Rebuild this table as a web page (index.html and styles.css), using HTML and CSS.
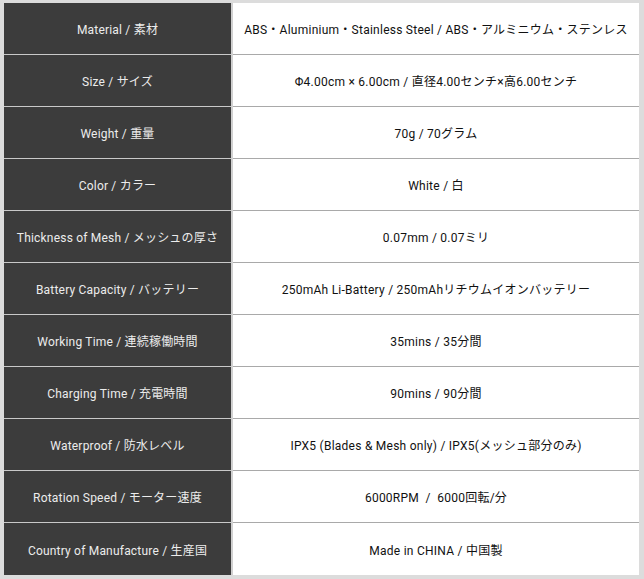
FILE: index.html
```html
<!DOCTYPE html>
<html lang="ja">
<head>
<meta charset="utf-8">
<link rel="stylesheet" href="styles.css">
</head>
<body>
<div class="frame">
<table class="spec">
<tbody>
<tr><th>Material / 素材</th><td>ABS・Aluminium・Stainless Steel / ABS・アルミニウム・ステンレス</td></tr>
<tr><th>Size / サイズ</th><td>Φ4.00cm × 6.00cm / 直径4.00センチ×高6.00センチ</td></tr>
<tr><th>Weight / 重量</th><td>70g / 70グラム</td></tr>
<tr><th>Color / カラー</th><td>White / 白</td></tr>
<tr><th>Thickness of Mesh / メッシュの厚さ</th><td>0.07mm / 0.07ミリ</td></tr>
<tr><th>Battery Capacity / バッテリー</th><td>250mAh Li-Battery / 250mAhリチウムイオンバッテリー</td></tr>
<tr><th>Working Time / 連続稼働時間</th><td>35mins / 35分間</td></tr>
<tr><th>Charging Time / 充電時間</th><td>90mins / 90分間</td></tr>
<tr><th>Waterproof / 防水レベル</th><td>IPX5 (Blades &amp; Mesh only) / IPX5(メッシュ部分のみ)</td></tr>
<tr><th>Rotation Speed / モーター速度</th><td>6000RPM &nbsp;/ &nbsp;6000回転/分</td></tr>
<tr><th>Country of Manufacture / 生産国</th><td>Made in CHINA / 中国製</td></tr>
</tbody>
</table>
</div>
</body>
</html>
```
FILE: styles.css
```css
html, body {
  margin: 0;
  padding: 0;
  background: #dcdcdc;
}
.frame {
  padding: 3px 5px 3px 4px;
}
.spec {
  width: 635px;
  border-collapse: collapse;
  table-layout: fixed;
  background: #ffffff;
  font-family: Roboto, "Noto Sans CJK JP", sans-serif;
  font-size: 12px;
}
.spec th {
  width: 227px;
  height: 51px;
  padding: 0;
  background: #3c3c3c;
  color: #ececec;
  font-weight: normal;
  letter-spacing: 0.2px;
  text-align: center;
  border-bottom: 1px solid #c9c9c9;
  border-right: 2px solid #d0d0d0;
}
.spec td {
  height: 51px;
  padding: 0;
  color: #111111;
  letter-spacing: 0.25px;
  text-align: center;
  border-bottom: 1px solid #a9a9a9;
}
.spec tr:last-child th,
.spec tr:last-child td {
  border-bottom: none;
  height: 52px;
}
```
